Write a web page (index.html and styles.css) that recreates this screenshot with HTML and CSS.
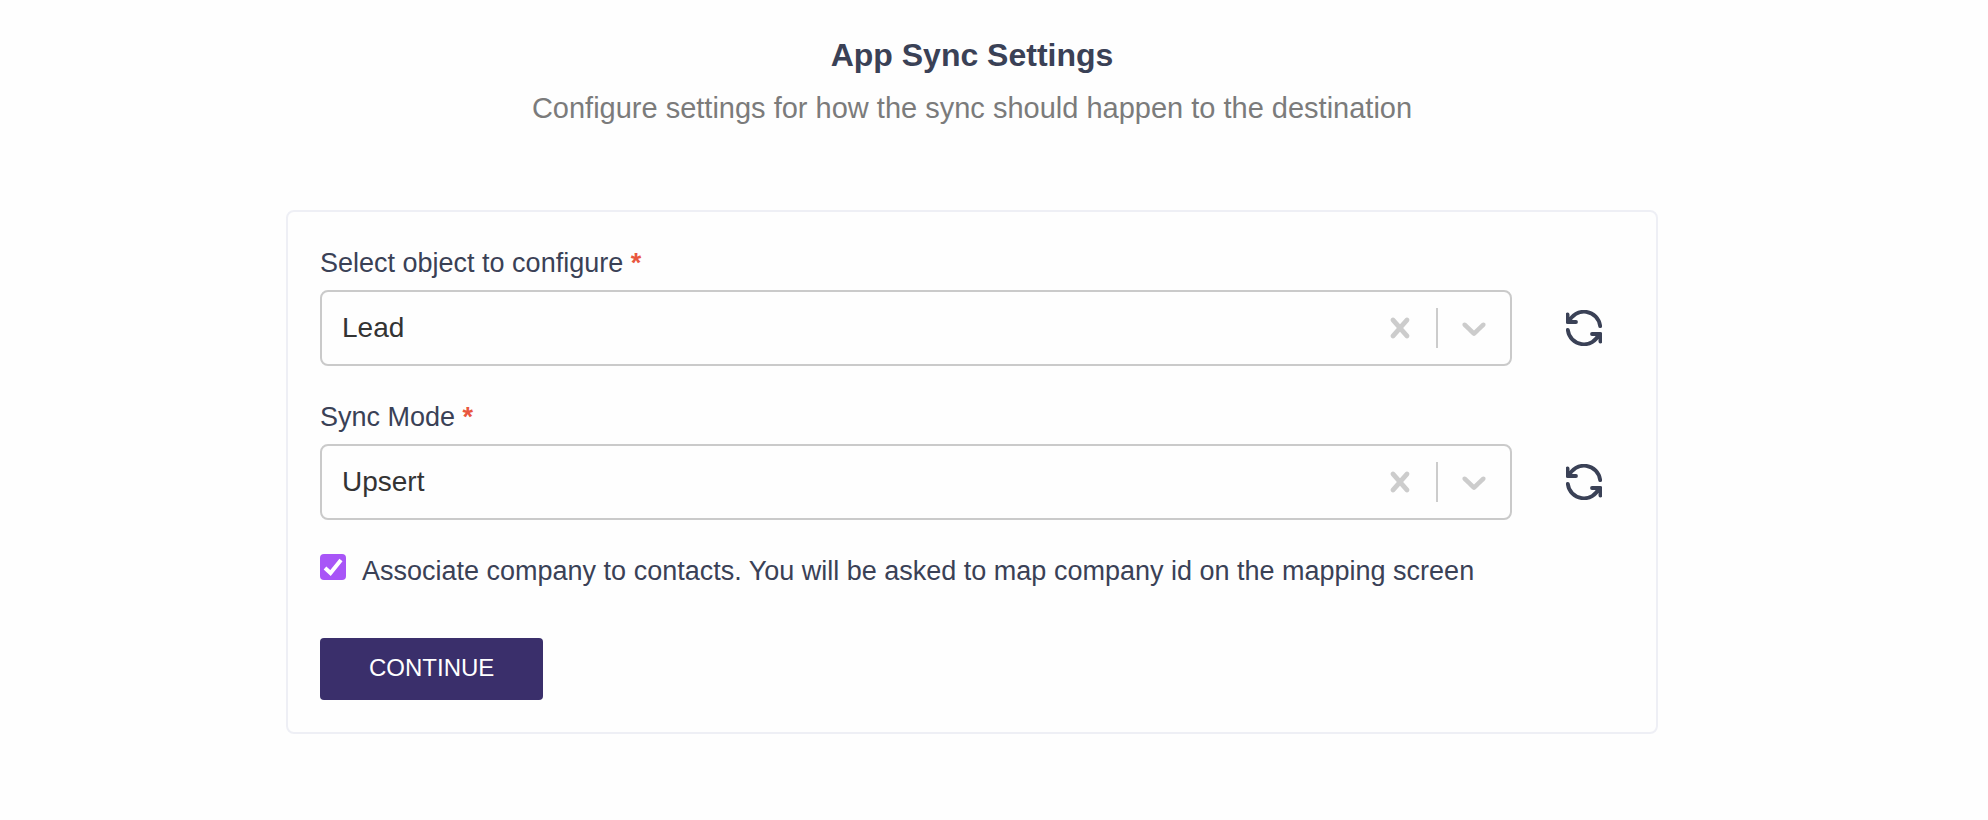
FILE: index.html
```html
<!DOCTYPE html>
<html lang="en">
<head>
<meta charset="utf-8">
<meta name="viewport" content="width=device-width, initial-scale=1">
<title>App Sync Settings</title>
<link rel="stylesheet" href="styles.css">
</head>
<body>
<svg class="sprite" aria-hidden="true">
  <symbol id="icon-clear" viewBox="0 0 20 20"><path fill="currentColor" d="M14.348 14.849c-0.469 0.469-1.229 0.469-1.697 0l-2.651-3.030-2.651 3.029c-0.469 0.469-1.229 0.469-1.697 0-0.469-0.469-0.469-1.229 0-1.697l2.758-3.15-2.759-3.152c-0.469-0.469-0.469-1.228 0-1.697s1.228-0.469 1.697 0l2.652 3.031 2.651-3.031c0.469-0.469 1.228-0.469 1.697 0s0.469 1.229 0 1.697l-2.758 3.152 2.758 3.15c0.469 0.469 0.469 1.229 0 1.698z"/></symbol>
  <symbol id="icon-chevron" viewBox="0 0 20 20"><path fill="currentColor" d="M4.516 7.548c0.436-0.446 1.043-0.481 1.576 0l3.908 3.747 3.908-3.747c0.533-0.481 1.141-0.446 1.574 0 0.436 0.445 0.408 1.197 0 1.615-0.406 0.418-4.695 4.502-4.695 4.502-0.217 0.223-0.502 0.335-0.787 0.335s-0.57-0.112-0.789-0.335c0 0-4.287-4.084-4.695-4.502s-0.436-1.17 0-1.615z"/></symbol>
  <symbol id="icon-refresh" viewBox="0 0 36 36"><path fill="none" stroke="currentColor" stroke-width="3.8" stroke-linecap="round" stroke-linejoin="round" d="M34.2 16.2A16.2 16.2 0 0 0 3 12M1.6 4.4V12H10M1.8 19.8A16.2 16.2 0 0 0 33 24M34.4 31.6V24H26"/></symbol>
</svg>
<main class="page">
  <header class="heading">
    <h1 class="title">App Sync Settings</h1>
    <p class="subtitle">Configure settings for how the sync should happen to the destination</p>
  </header>
  <form class="card">
    <div class="field">
      <label class="label" for="object">Select object to configure <span class="required">*</span></label>
      <div class="row">
        <div class="control">
          <select class="select" id="object"><option>Lead</option></select>
          <button class="indicator" type="button" aria-label="Clear object"><svg class="indicator-icon"><use href="#icon-clear"/></svg></button>
          <span class="separator"></span>
          <span class="indicator"><svg class="indicator-icon"><use href="#icon-chevron"/></svg></span>
        </div>
        <button class="refresh" type="button" aria-label="Refresh objects"><svg class="refresh-icon"><use href="#icon-refresh"/></svg></button>
      </div>
    </div>
    <div class="field">
      <label class="label" for="mode">Sync Mode <span class="required">*</span></label>
      <div class="row">
        <div class="control">
          <select class="select" id="mode"><option>Upsert</option></select>
          <button class="indicator" type="button" aria-label="Clear sync mode"><svg class="indicator-icon"><use href="#icon-clear"/></svg></button>
          <span class="separator"></span>
          <span class="indicator"><svg class="indicator-icon"><use href="#icon-chevron"/></svg></span>
        </div>
        <button class="refresh" type="button" aria-label="Refresh sync modes"><svg class="refresh-icon"><use href="#icon-refresh"/></svg></button>
      </div>
    </div>
    <div class="check">
      <span class="checkbox-wrap">
        <input class="checkbox" type="checkbox" id="associate" checked>
        <svg class="tick" viewBox="0 0 26 26" aria-hidden="true"><path d="M5 14l5.5 5L21 6" fill="none" stroke="currentColor" stroke-width="4"/></svg>
      </span>
      <label class="label" for="associate">Associate company to contacts. You will be asked to map company id on the mapping screen</label>
    </div>
    <button class="submit" type="submit">CONTINUE</button>
  </form>
</main>
</body>
</html>
```
FILE: styles.css
```css
* {
  box-sizing: border-box;
}

body {
  margin: 0;
  background: #fefefe;
  color: #3a4156;
  font-family: "Liberation Sans", Arial, sans-serif;
}

button,
select,
input {
  margin: 0;
  font-family: inherit;
}

.sprite {
  display: none;
}

.page {
  padding: 32px 330px 32px 286px;
}

.heading {
  display: flex;
  flex-direction: column;
  gap: 8px;
  margin-bottom: 80px;
  text-align: center;
}

.title {
  margin: 0;
  font-size: 32px;
  line-height: 46px;
}

.subtitle {
  margin: 0;
  color: #7b7b7b;
  font-size: 29px;
  line-height: 44px;
}

.card {
  display: flex;
  flex-direction: column;
  align-items: stretch;
  padding: 32px;
  border: 2px solid #eeeff5;
  border-radius: 8px;
}

.field {
  display: flex;
  flex-direction: column;
  gap: 8px;
  margin-bottom: 32px;
}

.label {
  font-size: 27px;
  line-height: 38px;
}

.required {
  color: #e9573f;
  font-weight: bold;
}

.row {
  display: flex;
  align-items: center;
  gap: 32px;
}

.control {
  display: flex;
  flex: 1;
  align-items: center;
  min-width: 0;
  border: 2px solid #cacaca;
  border-radius: 8px;
}

.select {
  flex: 1;
  min-width: 0;
  height: 72px;
  padding: 0 20px 2px;
  border: 0;
  background: transparent;
  color: #333333;
  font-size: 28px;
  appearance: none;
}

.indicator {
  display: flex;
  padding: 16px;
  border: 0;
  background: transparent;
  color: #cccccc;
}

.indicator-icon {
  width: 40px;
  height: 40px;
}

.separator {
  align-self: stretch;
  width: 2px;
  margin: 16px 0;
  background: #cccccc;
}

.refresh {
  display: flex;
  padding: 20px 22px;
  border: 0;
  background: transparent;
  color: #3a4156;
}

.refresh-icon {
  width: 36px;
  height: 36px;
}

.check {
  display: flex;
  align-items: flex-start;
  gap: 16px;
  margin-bottom: 48px;
}

.checkbox-wrap {
  position: relative;
  display: flex;
  padding-top: 2px;
}

.checkbox {
  width: 26px;
  height: 26px;
  border-radius: 4px;
  background: #a855f7;
  appearance: none;
}

.tick {
  position: absolute;
  bottom: 0;
  left: 0;
  width: 26px;
  height: 26px;
  color: #ffffff;
  pointer-events: none;
}

.checkbox:not(:checked) + .tick {
  display: none;
}

.submit {
  align-self: flex-start;
  padding: 11px 49px 13px;
  border: 0;
  border-radius: 4px;
  background: #3a2f6b;
  color: #ffffff;
  font-size: 24px;
  line-height: 38px;
}

@media (max-width: 1200px) {
  .page {
    padding: 32px;
  }
}
```
